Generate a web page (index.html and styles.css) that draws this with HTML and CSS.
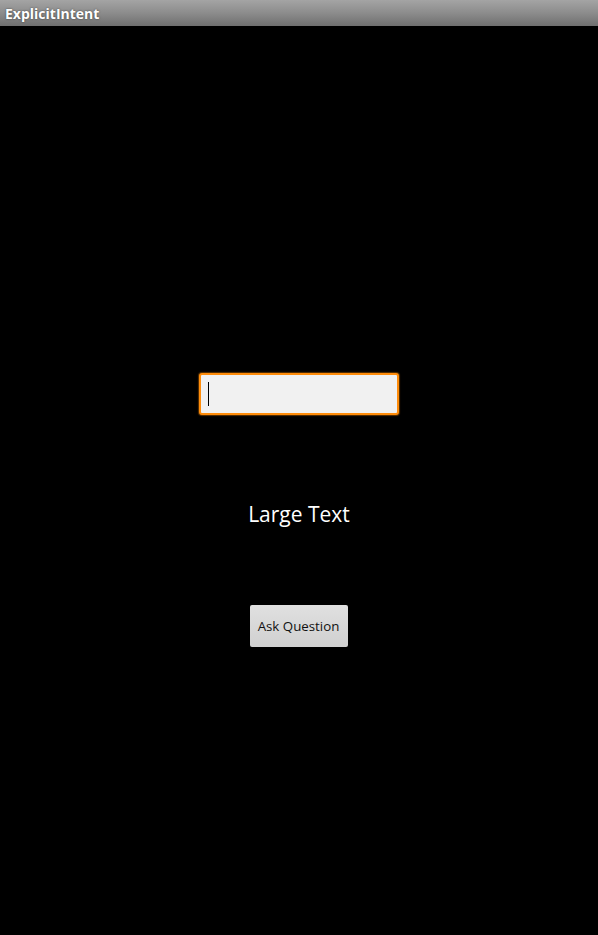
FILE: index.html
```html
<!DOCTYPE html>
<html>
<head>
<meta charset="utf-8">
<link rel="stylesheet" href="styles.css">
</head>
<body>
<div class="titlebar"><span class="title">ExplicitIntent</span></div>
<main class="content">
  <div class="edit"><span class="cursor"></span></div>
  <div class="large">Large Text</div>
  <button class="btn">Ask Question</button>
</main>
</body>
</html>
```

FILE: styles.css
```css
html, body {
  margin: 0;
  padding: 0;
  background: #000;
  height: 100%;
}
body {
  font-family: "Open Sans", "DejaVu Sans", sans-serif;
}
.titlebar {
  height: 26px;
  background: linear-gradient(to bottom, #a4a4a4 0%, #8c8c8c 50%, #6f6f6f 100%);
  display: flex;
  align-items: center;
  padding-left: 5px;
  box-sizing: border-box;
}
.title {
  color: #fff;
  font-weight: bold;
  font-size: 14px;
  text-shadow: 0 0 2px rgba(0,0,0,0.6);
}
.content {
  display: flex;
  flex-direction: column;
  align-items: center;
  padding-top: 347px;
}
.edit {
  width: 200px;
  height: 42px;
  box-sizing: border-box;
  border: 2.5px solid #ff8c0a;
  border-radius: 3px;
  background: #f1f1f1;
  box-shadow: 0 0 1px 1px rgba(255,140,10,0.35);
  display: flex;
  align-items: center;
  padding-left: 7px;
  margin-left: -1px;
}
.cursor {
  width: 1.5px;
  height: 24px;
  background: #000;
}
.large {
  color: #fff;
  font-size: 21px;
  line-height: 30px;
  margin-top: 84px;
}
.btn {
  margin-top: 76px;
  width: 98px;
  height: 42px;
  border: none;
  border-radius: 2px;
  background: linear-gradient(to bottom, #e0e0e0 0%, #d0d0d0 100%);
  font-family: "Open Sans", "DejaVu Sans", sans-serif;
  font-size: 13.3px;
  color: #111;
  padding: 0;
  margin-left: -1px;
}
```
